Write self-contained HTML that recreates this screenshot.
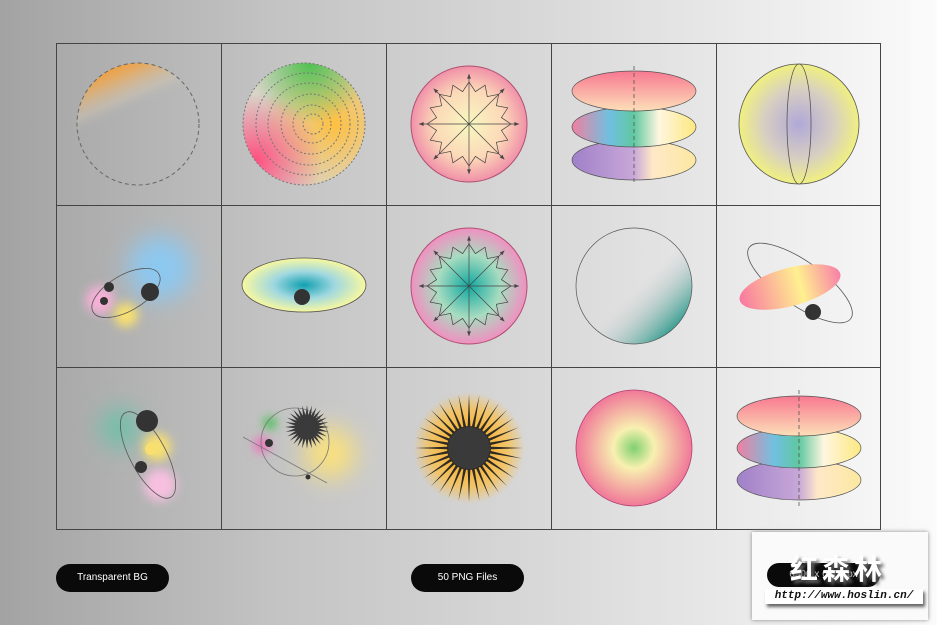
<!DOCTYPE html>
<html><head><meta charset="utf-8"><style>
body{margin:0;width:937px;height:625px;overflow:hidden;background:linear-gradient(90deg,#a3a3a3 0%,#c4c4c4 30%,#dadada 60%,#fbfbfb 100%);font-family:"Liberation Sans",sans-serif;position:relative}
.pill{position:absolute;top:564px;height:28px;width:113px;border-radius:14px;background:#0a0a0a;color:#fff;font-size:10px;line-height:28px;text-align:center}
svg{position:absolute;left:0;top:0}
</style></head><body>
<svg width="937" height="625" viewBox="0 0 937 625">
<defs>
<linearGradient id="g1" x1="0.1" y1="0" x2="0.4" y2="0.7"><stop offset="0" stop-color="#ff9010"/><stop offset="0.25" stop-color="#f0a850" stop-opacity="0.8"/><stop offset="0.5" stop-color="#d8c8b0" stop-opacity="0.4"/><stop offset="0.65" stop-color="#bbb" stop-opacity="0"/></linearGradient>
<radialGradient id="g2a" cx="0.75" cy="0.5" r="0.6"><stop offset="0" stop-color="#ffc040"/><stop offset="1" stop-color="#ffc040" stop-opacity="0"/></radialGradient>
<radialGradient id="g2b" cx="0.55" cy="0" r="0.5"><stop offset="0" stop-color="#50c050"/><stop offset="1" stop-color="#50c050" stop-opacity="0"/></radialGradient>
<radialGradient id="g2c" cx="0.1" cy="0.8" r="0.55"><stop offset="0" stop-color="#ff5080"/><stop offset="1" stop-color="#ff5080" stop-opacity="0"/></radialGradient>
<radialGradient id="g3"><stop offset="0" stop-color="#f8f8c0"/><stop offset="0.6" stop-color="#fcd8b8"/><stop offset="1" stop-color="#f090a8"/></radialGradient>
<radialGradient id="g3b"><stop offset="0" stop-color="#10a8a0"/><stop offset="0.55" stop-color="#a8dcc0"/><stop offset="1" stop-color="#f090c0"/></radialGradient>
<linearGradient id="e1" x1="0" y1="0" x2="0" y2="1"><stop offset="0" stop-color="#f87890"/><stop offset="1" stop-color="#fce0b8"/></linearGradient>
<linearGradient id="e2" x1="0" y1="0" x2="1" y2="0"><stop offset="0" stop-color="#f080a0"/><stop offset="0.3" stop-color="#70c0e0"/><stop offset="0.5" stop-color="#60c8a0"/><stop offset="0.7" stop-color="#fff6e0"/><stop offset="1" stop-color="#fce880"/></linearGradient>
<linearGradient id="e3" x1="0" y1="0" x2="1" y2="0"><stop offset="0" stop-color="#a080c8"/><stop offset="0.5" stop-color="#c8a8d8"/><stop offset="0.65" stop-color="#ffe8c8"/><stop offset="1" stop-color="#fce8a0"/></linearGradient>
<radialGradient id="g5"><stop offset="0" stop-color="#b0a8d8"/><stop offset="0.6" stop-color="#d8d0c0"/><stop offset="1" stop-color="#f0f080"/></radialGradient>
<radialGradient id="ell"><stop offset="0" stop-color="#10a0b0"/><stop offset="0.5" stop-color="#a0d8e0"/><stop offset="1" stop-color="#f8f8a0"/></radialGradient>
<linearGradient id="tl" x1="0.2" y1="0.2" x2="0.9" y2="0.9"><stop offset="0.45" stop-color="#ccc" stop-opacity="0"/><stop offset="1" stop-color="#109080"/></linearGradient>
<linearGradient id="py" x1="0" y1="0" x2="1" y2="0"><stop offset="0" stop-color="#f878a0"/><stop offset="0.6" stop-color="#fff090"/><stop offset="1" stop-color="#f880a8"/></linearGradient>
<radialGradient id="gp"><stop offset="0" stop-color="#80d070"/><stop offset="0.35" stop-color="#f8f0b0"/><stop offset="1" stop-color="#f07898"/></radialGradient>
<radialGradient id="sun"><stop offset="0.3" stop-color="#f8b030"/><stop offset="0.7" stop-color="#f8c050" stop-opacity="0.8"/><stop offset="1" stop-color="#f8c050" stop-opacity="0"/></radialGradient>
<filter id="bl" x="-1" y="-1" width="3" height="3"><feGaussianBlur stdDeviation="12"/></filter>
<filter id="bs" x="-1" y="-1" width="3" height="3"><feGaussianBlur stdDeviation="5"/></filter>
</defs>
<g stroke="#444" stroke-width="1" fill="none">
<rect x="56.5" y="43.5" width="824" height="486"/>
<path d="M221.5 43v487M386.5 43v487M551.5 43v487M716.5 43v487M56 205.5h825M56 367.5h825"/>
</g>
<circle cx="138" cy="124" r="61" fill="url(#g1)" stroke="#666" stroke-dasharray="4 3"/>
<circle cx="304" cy="124" r="61" fill="#d8d4c8"/>
<circle cx="304" cy="124" r="61" fill="url(#g2a)"/>
<circle cx="304" cy="124" r="61" fill="url(#g2b)"/>
<circle cx="304" cy="124" r="61" fill="url(#g2c)"/>
<g fill="none" stroke="#777" stroke-dasharray="2 2"><circle cx="304" cy="124" r="61"/><circle cx="307" cy="124" r="51"/><circle cx="309" cy="124" r="41"/><circle cx="311" cy="124" r="30"/><circle cx="312" cy="124" r="19"/><circle cx="313" cy="124" r="10"/></g>
<circle cx="469" cy="124" r="58" fill="url(#g3)" stroke="#b05070"/>
<g id="star1"></g>
<ellipse cx="634" cy="160" rx="62" ry="20" fill="url(#e3)" stroke="#555" stroke-width="0.7"/>
<ellipse cx="634" cy="127" rx="62" ry="20" fill="url(#e2)" stroke="#555" stroke-width="0.7"/>
<ellipse cx="634" cy="91" rx="62" ry="20" fill="url(#e1)" stroke="#555" stroke-width="0.7"/>
<line x1="634" y1="66" x2="634" y2="182" stroke="#555" stroke-dasharray="4 3" stroke-width="0.8"/>
<circle cx="799" cy="124" r="60" fill="url(#g5)" stroke="#555" stroke-width="0.8"/>
<ellipse cx="799" cy="124" rx="12" ry="60" fill="none" stroke="#555" stroke-width="0.8"/>
<circle cx="160" cy="268" r="32" fill="#8cc8f0" filter="url(#bl)"/>
<circle cx="100" cy="300" r="14" fill="#f8b0d8" filter="url(#bs)"/>
<circle cx="126" cy="315" r="12" fill="#f8e070" filter="url(#bs)"/>
<ellipse cx="126" cy="293" rx="38" ry="18" transform="rotate(-30 126 293)" fill="none" stroke="#555" stroke-width="0.8"/>
<circle cx="150" cy="292" r="9" fill="#333"/><circle cx="109" cy="287" r="5" fill="#333"/><circle cx="104" cy="301" r="4" fill="#333"/>
<ellipse cx="304" cy="285" rx="62" ry="27" fill="url(#ell)" stroke="#555" stroke-width="0.8"/>
<circle cx="302" cy="297" r="8" fill="#333"/>
<circle cx="469" cy="286" r="58" fill="url(#g3b)" stroke="#b05070"/>
<g id="star2"></g>
<circle cx="634" cy="286" r="58" fill="url(#tl)" stroke="#555" stroke-width="0.7"/>
<ellipse cx="800" cy="283" rx="62" ry="22" transform="rotate(35 800 283)" fill="none" stroke="#555" stroke-width="0.8"/>
<ellipse cx="790" cy="287" rx="52" ry="19" transform="rotate(-15 790 287)" fill="url(#py)"/>
<circle cx="813" cy="312" r="8" fill="#333"/>
<circle cx="120" cy="428" r="20" fill="#70c0a8" filter="url(#bl)"/>
<circle cx="157" cy="447" r="14" fill="#f8e070" filter="url(#bs)"/>
<circle cx="160" cy="485" r="16" fill="#f8c0e0" filter="url(#bs)"/>
<ellipse cx="148" cy="455" rx="48" ry="18" transform="rotate(62 148 455)" fill="none" stroke="#555" stroke-width="0.8"/>
<circle cx="147" cy="421" r="11" fill="#333"/><circle cx="151" cy="449" r="6" fill="#f8e070"/><circle cx="141" cy="467" r="6" fill="#333"/>
<circle cx="330" cy="453" r="26" fill="#f8e080" filter="url(#bl)"/>
<circle cx="270" cy="423" r="6" fill="#30c040" filter="url(#bs)"/>
<circle cx="262" cy="445" r="8" fill="#f070c0" filter="url(#bs)"/>
<circle cx="295" cy="442" r="34" fill="none" stroke="#777" stroke-width="0.8"/>
<line x1="243" y1="437" x2="327" y2="483" stroke="#777" stroke-width="0.8"/>
<circle cx="269" cy="443" r="4" fill="#333"/><circle cx="308" cy="477" r="2.5" fill="#333"/>
<g id="burst1"></g>
<circle cx="469" cy="448" r="56" fill="url(#sun)"/>
<g id="burst2"></g>
<circle cx="469" cy="448" r="21" fill="#3a3a3a"/>
<circle cx="634" cy="448" r="58" fill="url(#gp)" stroke="#b04070" stroke-width="0.8"/>
<ellipse cx="799" cy="480" rx="62" ry="20" fill="url(#e3)" stroke="#555" stroke-width="0.7"/>
<ellipse cx="799" cy="448" rx="62" ry="20" fill="url(#e2)" stroke="#555" stroke-width="0.7"/>
<ellipse cx="799" cy="416" rx="62" ry="20" fill="url(#e1)" stroke="#555" stroke-width="0.7"/>
<line x1="799" y1="390" x2="799" y2="508" stroke="#555" stroke-dasharray="4 3" stroke-width="0.8"/>
</svg>
<div class="pill" style="left:56px">Transparent BG</div>
<div class="pill" style="left:411px">50 PNG Files</div>
<div style="position:absolute;left:752px;top:532px;width:176px;height:88px;background:#fafafa;box-shadow:0 0 4px #888"></div>
<div class="pill" style="left:767px;width:113px;top:563px;height:24px;line-height:24px;color:#ccc">6500 x 6500 px</div>
<div style="position:absolute;left:790px;top:548px;font-family:'Noto Sans CJK SC',sans-serif;font-size:28px;font-weight:bold;color:#fff;text-shadow:3px 3px 3px #666;letter-spacing:4px">红森林</div>
<div style="position:absolute;left:765px;top:589px;width:158px;height:15px;background:#fff;box-shadow:2px 3px 3px #666;font-family:'Liberation Mono',monospace;font-style:italic;font-weight:bold;font-size:11px;line-height:15px;color:#111;text-align:center">http://www.hoslin.cn/</div>
<script>
var NS="http://www.w3.org/2000/svg";
function el(p,t,a){var e=document.createElementNS(NS,t);for(var k in a)e.setAttribute(k,a[k]);p.appendChild(e);return e;}
function star(id,cx,cy){var g=document.getElementById(id);var pts=[];for(var i=0;i<32;i++){var a=i*Math.PI/16,r=i%2?33:42;pts.push((cx+r*Math.cos(a)).toFixed(1)+","+(cy+r*Math.sin(a)).toFixed(1));}
el(g,"polygon",{points:pts.join(" "),fill:"none",stroke:"#444","stroke-width":"0.7"});
for(var i=0;i<8;i++){var a=i*Math.PI/4,x=cx+50*Math.cos(a),y=cy+50*Math.sin(a);el(g,"line",{x1:cx,y1:cy,x2:x,y2:y,stroke:"#444","stroke-width":"0.7"});
var b=a+Math.PI;el(g,"polygon",{points:x+","+y+" "+(x+5*Math.cos(b+0.4))+","+(y+5*Math.sin(b+0.4))+" "+(x+5*Math.cos(b-0.4))+","+(y+5*Math.sin(b-0.4)),fill:"#444"});}}
star("star1",469,124);star("star2",469,286);
function burst(id,cx,cy,n,r0,r1,w,col){var g=document.getElementById(id);for(var i=0;i<n;i++){var a=i*2*Math.PI/n,p=a+Math.PI/2;
var pts=[[cx+r0*Math.cos(a)+w*Math.cos(p),cy+r0*Math.sin(a)+w*Math.sin(p)],[cx+r1*Math.cos(a),cy+r1*Math.sin(a)],[cx+r0*Math.cos(a)-w*Math.cos(p),cy+r0*Math.sin(a)-w*Math.sin(p)]];
el(g,"polygon",{points:pts.map(function(q){return q[0].toFixed(1)+","+q[1].toFixed(1)}).join(" "),fill:col});}
el(g,"circle",{cx:cx,cy:cy,r:r0+2,fill:col});}
burst("burst1",307,427,28,10,22,1.6,"#3a3a3a");
burst("burst2",469,448,32,20,54,1.4,"#2e2a24");
</script>
</body></html>
